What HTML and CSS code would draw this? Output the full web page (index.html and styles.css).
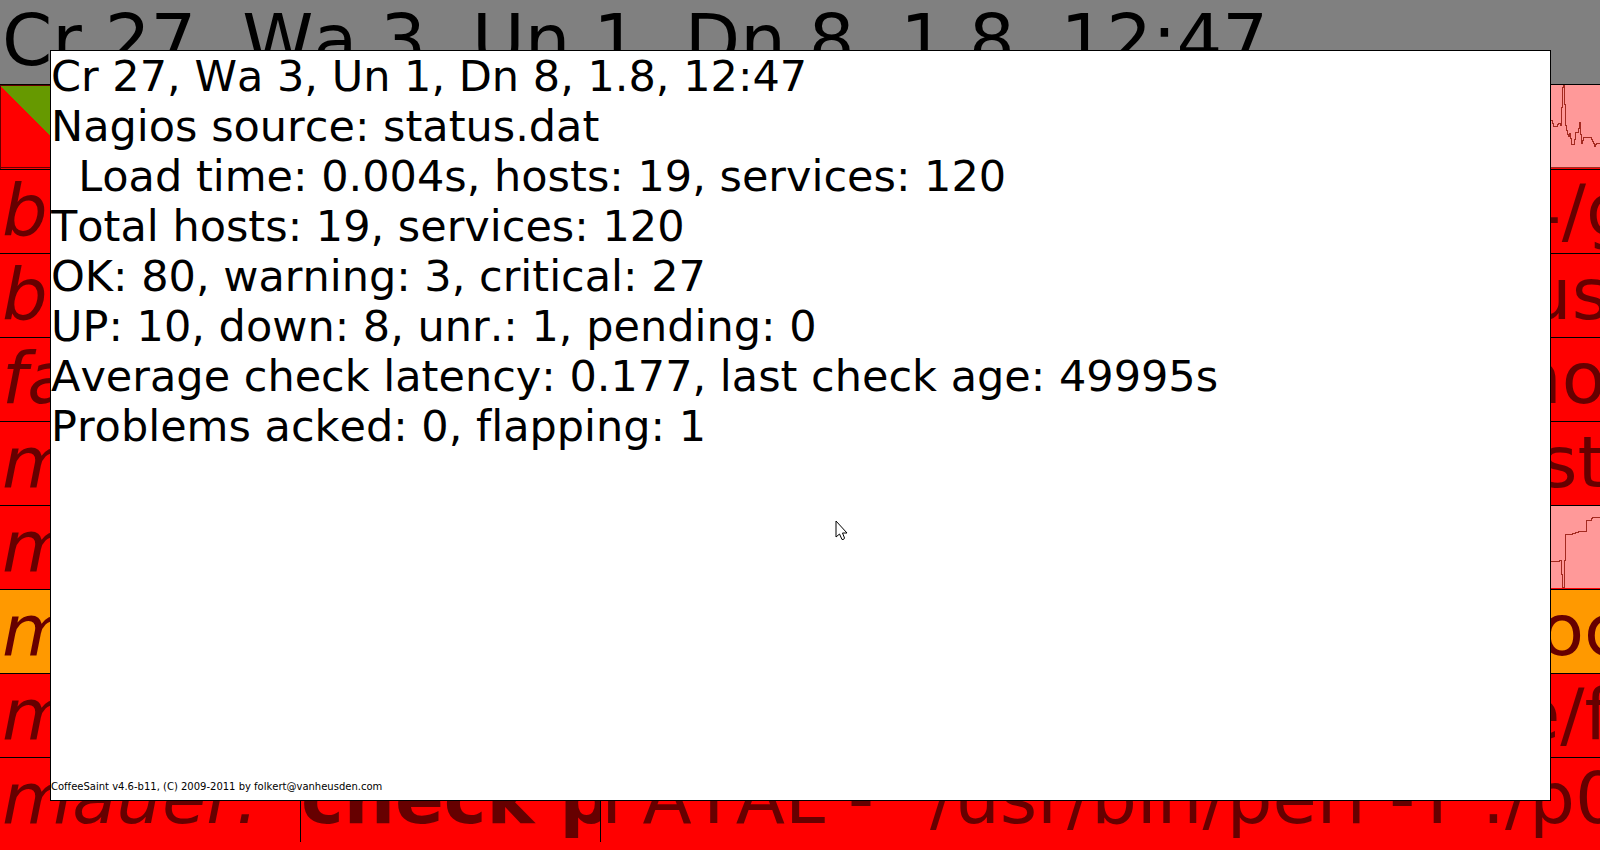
FILE: index.html
```html
<!DOCTYPE html>
<html lang="en">
<head>
<meta charset="utf-8">
<title>CoffeeSaint</title>
<link rel="stylesheet" href="styles.css">
</head>
<body>
<main class="board">
  <header class="summary">Cr 27, Wa 3, Un 1, Dn 8, 1.8, 12:47</header>
  <div class="row split">
    <svg class="trend" width="50" height="84" viewBox="0 0 50 84" shape-rendering="crispEdges" aria-hidden="true">
      <rect class="trend-bg" width="50" height="83"/>
      <path class="trend-edge" d="M0 82.5H50"/>
      <path class="trend-line" d="M1 35.500h1v3h1v3h4v-2h1v-1h2v2h1v-18h1V2.500h1v-3h1v20h1v21h1v5h1v4h1v2h1v-3h1v5h1v6h3v-5h1v-7h3v-4h1v-6h1v12h1v9h1v-3h1v-3h8v2h1v2h1v2h1v3h1v-2h1v-1h8"/>
    </svg>
  </div>
  <div class="row"><span class="host">b</span><span class="tail">4/g</span></div>
  <div class="row"><span class="host">b</span><span class="tail mid">us</span></div>
  <div class="row"><span class="host">fa</span><span class="tail">no</span></div>
  <div class="row"><span class="host">m</span><span class="tail short">st</span></div>
  <div class="row"><span class="host">m</span>
    <svg class="trend" width="50" height="82" viewBox="0 0 50 82" shape-rendering="crispEdges" aria-hidden="true">
      <rect class="trend-bg" width="50" height="82"/>
      <path class="trend-line" d="M0 55.500h9v-1h2v14h1v13h2v-27h1v-26h7v-1h3v-1h3v-1h8v-11h5v-2h1v-1h8"/>
    </svg>
  </div>
  <div class="row warning"><span class="host">m</span><span class="tail short">oc</span></div>
  <div class="row"><span class="host">m</span><span class="tail">e/f</span></div>
  <div class="row last"><span class="host">mauer.</span><span class="service">check p</span><span class="output">FATAL - "/usr/bin/perl -T ./p0</span></div>
</main>
<section class="popup" aria-label="Statistics">
  <div class="stats">
    <p>Cr 27, Wa 3, Un 1, Dn 8, 1.8, 12:47</p>
    <p>Nagios source: status.dat</p>
    <p>  Load time: 0.004s, hosts: 19, services: 120</p>
    <p>Total hosts: 19, services: 120</p>
    <p>OK: 80, warning: 3, critical: 27</p>
    <p>UP: 10, down: 8, unr.: 1, pending: 0</p>
    <p>Average check latency: 0.177, last check age: 49995s</p>
    <p>Problems acked: 0, flapping: 1</p>
  </div>
  <footer class="credit">CoffeeSaint v4.6-b11, (C) 2009-2011 by folkert@vanheusden.com</footer>
</section>
<svg class="pointer" width="14" height="22" viewBox="0 0 14 22" aria-hidden="true">
  <path d="M1 1V17L4.500 14L7 19.500Q9 20 9.500 18L7.500 13H12Z"/>
</svg>
</body>
</html>
```

FILE: styles.css
```css
body {
  margin: 0;
  min-height: 100vh;
  background: #f00;
  font-family: "DejaVu Sans", sans-serif;
  font-kerning: none;
  font-variant-ligatures: none;
  color: #000;
  overflow: hidden;
}

.board {
  font-size: 72px;
  line-height: 80px;
  overflow: hidden;
}

.summary {
  height: 84px;
  padding-left: 2px;
  background: #808080;
  border-bottom: 1px solid #000;
  white-space: nowrap;
}

.row {
  display: flex;
  height: 83px;
  background: #f00;
  border-bottom: 1px solid #000;
  color: #600;
  white-space: nowrap;
  overflow: hidden;
}

.row.split {
  height: 84px;
  background: linear-gradient(45deg, #f00 50%, #690 50%) 1px 1px / 81px 81px no-repeat #f00;
  box-shadow: inset 1px 1px #600, inset 0 -1px #f00, inset 0 -2px #600;
}

.row.warning {
  background: #f90;
}

.row.last {
  height: 84px;
  border-bottom: 0;
}

.host {
  flex: 0 0 300px;
  box-sizing: border-box;
  padding-left: 2px;
  font-style: italic;
}

.service {
  flex: 0 0 300px;
  box-sizing: border-box;
  border-left: 1px solid #000;
  font-weight: bold;
  overflow: hidden;
}

.output {
  flex: 1 0 0;
  min-width: 0;
  border-left: 1px solid #000;
}

.tail {
  width: 84px;
  margin-left: auto;
}

.tail.mid {
  width: 74px;
}

.tail.short {
  width: 60px;
}

.trend {
  display: block;
  margin-left: auto;
}

.trend-bg {
  fill: #f99;
}

.trend-line,
.trend-edge {
  fill: none;
  stroke: #a32a20;
}

.popup {
  position: absolute;
  inset: 50px 49px 49px 50px;
  box-sizing: border-box;
  display: flex;
  flex-direction: column;
  justify-content: space-between;
  background: #fff;
  border: 1px solid #000;
}

.stats {
  font-size: 43px;
  line-height: 50px;
}

.stats p {
  margin: 0;
  white-space: pre;
}

.credit {
  padding-bottom: 7px;
  font-size: 10px;
  line-height: 12px;
}

.pointer {
  position: absolute;
  left: 835px;
  top: 520px;
  fill: #fff;
  stroke: #000;
}
```
